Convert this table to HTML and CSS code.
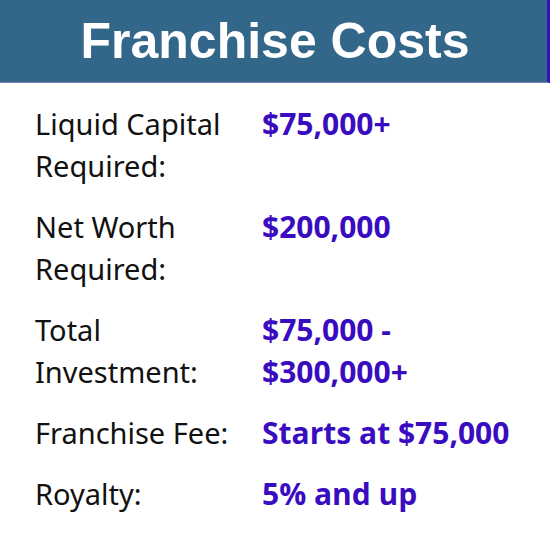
FILE: index.html
```html
<!DOCTYPE html>
<html>
<head>
<meta charset="utf-8">
<link rel="stylesheet" href="styles.css">
</head>
<body>
<header class="banner"><h1 class="title">Franchise Costs</h1></header>
<main class="costs">
  <div class="row"><div class="label">Liquid Capital Required:</div><div class="value">$75,000+</div></div>
  <div class="row"><div class="label">Net Worth Required:</div><div class="value">$200,000</div></div>
  <div class="row"><div class="label">Total Investment:</div><div class="value">$75,000 -<br>$300,000+</div></div>
  <div class="row"><div class="label">Franchise Fee:</div><div class="value">Starts at $75,000</div></div>
  <div class="row"><div class="label">Royalty:</div><div class="value">5% and up</div></div>
</main>
</body>
</html>
```
FILE: styles.css
```css
html, body { margin: 0; padding: 0; background: #fff; }
body { width: 550px; height: 550px; overflow: hidden; }
.banner {
  background: #33678a;
  border-right: 3px solid #3a10b8;
  border-bottom: 1px solid #7f80c8;
  display: flex;
  align-items: center;
  justify-content: center;
  box-sizing: border-box;
  height: 83px;
}
.title {
  margin: 0;
  font-family: "Liberation Sans", Arial, sans-serif;
  font-weight: bold;
  font-size: 50px;
  color: #fff;
  line-height: 1;
  padding-left: 3px;
}
.costs {
  display: flex;
  flex-direction: column;
  gap: 19px;
  padding: 20px 0 0 35px;
  font-size: 29px;
  line-height: 42px;
}
.row {
  display: grid;
  grid-template-columns: 227px 1fr;
}
.label { color: #111; width: 200px; font-family: "Noto Sans", sans-serif; }
.value { color: #3a0cbf; font-weight: bold; font-family: "Open Sans", sans-serif; font-size: 30px; }
```
